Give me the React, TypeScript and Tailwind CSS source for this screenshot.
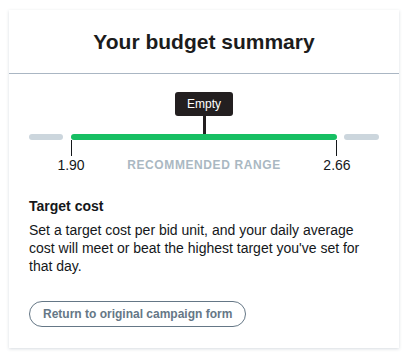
export default function App() {
  return (
    <div className="min-h-screen bg-white pl-[9px] pt-[10px] font-['Liberation_Sans',Arial,sans-serif]">
      <div className="w-[390px] h-[338px] bg-white shadow-[0_1px_3px_rgba(101,119,134,0.25)] flex flex-col">
        <div className="h-[64px] border-b border-[#aab6c3] flex items-center justify-center">
          <h1 className="text-[21px] font-bold text-[#1c1c1c] leading-none">Your budget summary</h1>
        </div>

        <div className="px-5 pt-[18px] pb-[19px] flex flex-col">
          {/* range slider */}
          <div className="flex flex-col items-center">
            <div className="h-[24px] px-[12px] rounded-[3px] bg-[#231f20] text-white text-[12px] flex items-center">
              Empty
            </div>
            <div className="w-[3px] h-[18px] bg-[#231f20]" />
          </div>
          <div className="flex items-start h-[6px]">
            <div className="w-[34px] h-[6px] rounded-full bg-[#ccd6dd]" />
            <div className="flex-1 ml-[8px] mr-[7px] h-[6px] rounded-full bg-[#17bf63]" />
            <div className="w-[35px] h-[6px] rounded-full bg-[#ccd6dd]" />
          </div>
          <div className="flex items-start">
            <div className="w-[42px]" />
            <div className="flex-1 mr-[42px] flex justify-between">
              <div className="w-0 flex flex-col items-center">
                <div className="w-px h-[16px] bg-[#14171a]" />
                <span className="text-[14px] leading-[18px] text-[#14171a]">1.90</span>
              </div>
              <span className="mt-[16px] text-[12px] leading-[18px] font-bold tracking-[0.6px] text-[#aab8c2]">
                RECOMMENDED RANGE
              </span>
              <div className="w-0 flex flex-col items-center">
                <div className="w-px h-[16px] bg-[#14171a]" />
                <span className="text-[14px] leading-[18px] text-[#14171a]">2.66</span>
              </div>
            </div>
          </div>

          <h2 className="mt-[23px] text-[14px] leading-[18px] font-bold text-[#14171a]">Target cost</h2>
          <p className="mt-[6px] text-[14px] leading-[18px] text-[#14171a]">
            Set a target cost per bid unit, and your daily average cost will meet or beat the highest target
            you've set for that day.
          </p>

          <div className="mt-[26px]">
            <button className="h-[26px] px-[13px] rounded-full border border-[#657786] text-[#657786] text-[12px] font-bold">
              Return to original campaign form
            </button>
          </div>
        </div>
      </div>
    </div>
  )
}
